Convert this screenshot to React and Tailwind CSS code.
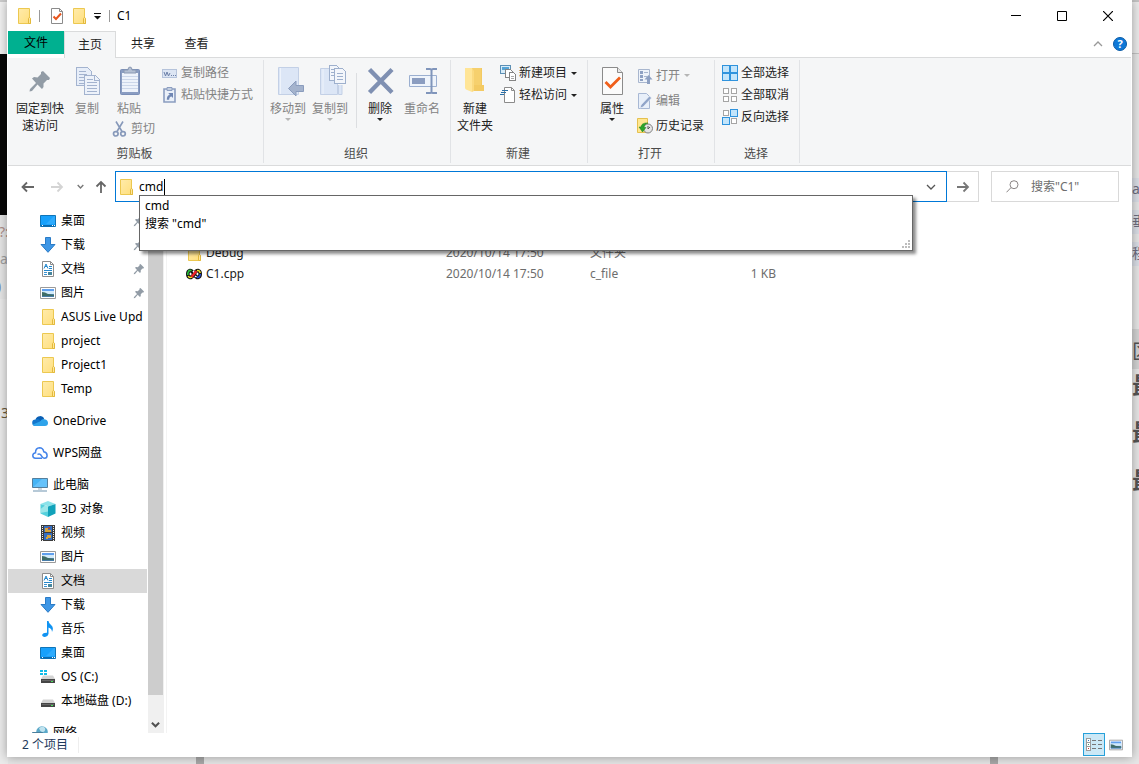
import React, { useState } from "react";

/* ---------- icons ---------- */

function Folder() {
  return (
    <svg width="16" height="16" viewBox="0 0 16 16" className="shrink-0">
      <defs>
        <linearGradient id="fold" x1="0" y1="0" x2="1" y2="1">
          <stop offset="0" stopColor="#ffebab" />
          <stop offset="1" stopColor="#ffdf7c" />
        </linearGradient>
      </defs>
      <path d="M2.500.5h11v9l1 1v5h-12z" fill="url(#fold)" stroke="#ecc850" />
      <path d="M12.500 15.500v-5l1-1.200 1 1.200v5z" fill="#ffe79a" stroke="#e3b93c" />
    </svg>
  );
}

function BigFolder() {
  return (
    <svg width="32" height="32" viewBox="0 0 32 32">
      <path d="M8 3h15v17h2v6H13z" fill="#f3ca63" />
      <path d="M6 3h7v24l-6-2.500q-1-.5-1-2z" fill="#ffe597" />
      <path d="M13 3h9v17h-9z" fill="#f6d06d" />
      <path d="M13 3 15 6V26l-2 1z" fill="#fbda80" />
    </svg>
  );
}

function CheckDoc({ size = 16 }) {
  return size === 16 ? (
    <svg width="16" height="16" viewBox="0 0 16 16">
      <path d="M2.500.5h8l3 3v12h-11z" fill="#fff" stroke="#8b8b8b" />
      <path d="M10.500.5v3h3" fill="none" stroke="#8b8b8b" />
      <path d="M4.500 8.500 7 11l5-5.500" fill="none" stroke="#e8561e" strokeWidth="2" />
    </svg>
  ) : (
    <svg width="32" height="32" viewBox="0 0 32 32">
      <path d="M6.500 2.500h15l5 5v22h-20z" fill="#fbfbfb" stroke="#8b8b8b" />
      <path d="M21.500 2.500v5h5" fill="#e8e8e8" stroke="#8b8b8b" />
      <path d="m9.500 17 5 5L24 12.500" fill="none" stroke="#f05f1b" strokeWidth="2.800" />
    </svg>
  );
}

function Pin({ size = 12 }) {
  return (
    <svg width={size} height={size} viewBox="0 0 24 24" className="shrink-0">
      <path
        d="M15 2 22 9 21 11 19 11 15.500 14.500 15.500 18 14 20 9.500 15.500 4 22 1.500 22.500 2 20 8 14 4 9.500 6 8 9.500 8.500 13 5 13 3z"
        fill="#929ca6"
      />
    </svg>
  );
}

function CopyBig() {
  return (
    <svg width="32" height="32" viewBox="0 0 32 32" stroke="#a3b3cf" shapeRendering="crispEdges">
      <path d="M5.500 2.500h11l4 4v14h-15z" fill="#e7eef9" />
      <path d="M8 6.500h7M8 9.500h8M8 12.500h5M8 15.500h5M8 18.500h5" fill="none" />
      <path d="M13.500 10.500h11l4 4v15h-15z" fill="#edf2fa" />
      <path d="M23.500 10.500v5h5M16 14.500h6M16 17.500h10M16 20.500h10M16 23.500h10M16 26.500h10" fill="none" />
    </svg>
  );
}

function PasteBig() {
  return (
    <svg width="32" height="32" viewBox="0 0 32 32">
      <rect x="7.500" y="4.500" width="19" height="25" rx="1" fill="#8a9dc2" stroke="#7b8fb7" />
      <path d="M9 8h16v19H9z" fill="#eef3fb" />
      <path d="M9 11.500h16M9 14.500h16M9 17.500h16M9 20.500h16M9 23.500h16" stroke="#ccd7ea" />
      <path d="M11 8V5h4q0-3 2-3t2 3h4v3z" fill="#b3bfd3" stroke="#8998b2" />
    </svg>
  );
}

function Scissors() {
  return (
    <svg width="16" height="16" viewBox="0 0 16 16" fill="none" stroke="#8799ba">
      <path d="m4 .5 6 10M11 .5 5 10.500" strokeWidth="1.600" />
      <ellipse cx="3.800" cy="12.800" rx="2.300" ry="2.200" strokeWidth="1.700" />
      <ellipse cx="11" cy="12.800" rx="2.300" ry="2.200" strokeWidth="1.700" />
    </svg>
  );
}

function PathIcon() {
  return (
    <svg width="16" height="16" viewBox="0 0 16 16">
      <rect x=".5" y="4.500" width="14" height="8" fill="#dce5f3" stroke="#b5c3db" />
      <path d="m2 7 1.500 4L5 7l1.500 4L8 8" fill="none" stroke="#6c80a8" />
      <path d="M9 10h1v1H9zM11 10h1v1h-1zM13 10h1v1h-1z" fill="#6c80a8" />
    </svg>
  );
}

function PasteShortcut() {
  return (
    <svg width="16" height="16" viewBox="0 0 16 16">
      <path d="M2 2h11v13H2z" fill="#eaf0f9" stroke="#8b9dc0" strokeWidth="1.600" />
      <path d="M5 .5h5v3H5z" fill="#c4cfe0" stroke="#8b9dc0" />
      <path d="M4.800 12.800c0-3.300 1-4.800 3-4.800L6.300 6H11v5L9.600 9.500c-1.800.2-2.400 1.500-2.400 3.300z" fill="#6f86b3" />
    </svg>
  );
}

function MoveTo() {
  return (
    <svg width="32" height="32" viewBox="0 0 32 32">
      <path d="M6.500 2.500h20v27h-20z" fill="#dce6f6" stroke="#c3d0e6" />
      <path d="M8.500 3v26" stroke="#eef3fb" />
      <path d="M16.500 23.500 24 16v4.500h7.500v6H24V31z" fill="#a4b3cd" stroke="#8a9cbd" />
    </svg>
  );
}

function CopyTo() {
  return (
    <svg width="32" height="32" viewBox="0 0 32 32">
      <path d="M6.500 3.500h17v26h-17z" fill="#dce6f6" stroke="#c3d0e6" />
      <path d="M24.500 20v9.500h3.500V20" fill="#dce6f6" stroke="#c3d0e6" />
      <path d="M9 4v25" stroke="#eef3fb" />
      <g stroke="#9eb0cd" fill="#f3f6fb" shapeRendering="crispEdges">
        <path d="M15.500.5h7l3 3v12h-10z" />
        <path d="M17 4.500h4M17 7.500h4M17 10.500h4" />
        <path d="M20.500 3.500h8l3 3v12h-11z" />
        <path d="M23 8.500h6M23 11.500h6M23 14.500h6" />
      </g>
    </svg>
  );
}

function DeleteX() {
  return (
    <svg width="32" height="32" viewBox="0 0 32 32">
      <path d="M5.500 4.500 28 27.500M28 4.500 5.500 27.500" stroke="#7f90b2" strokeWidth="4.400" />
    </svg>
  );
}

function Rename() {
  return (
    <svg width="32" height="32" viewBox="0 0 32 32">
      <path d="M3.500 10.500h27v11h-27z" fill="#eff4fb" stroke="#9bafd0" />
      <path d="M6 13h13v6H6z" fill="#8b9dc0" />
      <path d="M20 4h4q1 0 1.500 1 .5-1 1.500-1h4M25.500 5v21M20 28h4q1 0 1.500-1 .5 1 1.500 1h4" fill="none" stroke="#8095bb" strokeWidth="2" />
    </svg>
  );
}

function NewItem() {
  return (
    <svg width="16" height="16" viewBox="0 0 16 16" shapeRendering="crispEdges">
      <path d="M.5 .5h10v8H.5z" fill="#d8edfa" stroke="#5b8fb5" />
      <path d="M2 2h7v3H2z" fill="#56a4d6" />
      <path d="M5.500 4.500h5l2 2v6h-7z" fill="#fff" stroke="#848484" />
      <path d="M9.500 7.500h4l2 2v6h-6z" fill="#fff" stroke="#848484" />
      <path d="M11 11.500h3M11 13.500h3" stroke="#aaa" />
    </svg>
  );
}

function EasyAccess() {
  return (
    <svg width="16" height="16" viewBox="0 0 16 16">
      <path d="M4.500.5h7l3 3v12h-10z" fill="#fff" stroke="#8b8b8b" />
      <path d="M11.500.5v3h3" fill="none" stroke="#8b8b8b" />
      <path d="M2 3.500h6M1 5.500h5M0 7.500h4" stroke="#2b70a8" />
    </svg>
  );
}

function OpenIcon() {
  return (
    <svg width="16" height="16" viewBox="0 0 16 16">
      <path d="M1.500 1.500h11v13h-11z" fill="#eef3fa" stroke="#a8b6ce" />
      <path d="M3 3h3v3H3zM3 7h3v3H3zM3 11h3v2H3z" fill="#8ea1c3" />
      <path d="M7 4.500h4M7 8.500h3" stroke="#a8b6ce" />
      <path d="m11.500 7 4 4.500h-2.500V16h-3v-4.500H7.500z" fill="#8da0c2" />
    </svg>
  );
}

function EditIcon() {
  return (
    <svg width="16" height="16" viewBox="0 0 16 16">
      <path d="M1.500.5h8l3 3v12h-11z" fill="#e8eff9" stroke="#a8b8d4" />
      <path d="m3 15 1-3 8.500-9 2 2-8.500 9z" fill="#91a5c9" stroke="#f0f4fa" strokeWidth=".6" />
    </svg>
  );
}

function HistoryIcon() {
  return (
    <svg width="16" height="16" viewBox="0 0 16 16">
      <path d="M.5 .5h10v14H.5z" fill="#ffe790" stroke="#e5c04f" />
      <circle cx="11" cy="10.500" r="4.500" fill="#e4e4e4" stroke="#838383" />
      <path d="M11 8v3l2-2" fill="none" stroke="#555" />
      <path d="M11 5C6 4.500 4 7 4 9H2l3.500 5L9 9.500H7C7 7.500 8 6 11 5z" fill="#2ba52b" stroke="#1c801c" strokeWidth=".5" />
    </svg>
  );
}

function GridIcon({ on }) {
  const cells = [
    [0, 0],
    [8, 0],
    [0, 8],
    [8, 8],
  ];
  return (
    <svg width="16" height="16" viewBox="0 0 16 16" shapeRendering="crispEdges">
      {cells.map(([x, y], i) =>
        on[i] ? (
          <g key={i}>
            <rect x={x} y={y} width="8" height="8" fill="#2f93dd" />
            <rect x={x + 1} y={y + 1} width="6" height="6" fill="#c3e5fb" />
          </g>
        ) : (
          <rect key={i} x={x + 1.5} y={y + 1.5} width="5" height="5" fill="#fff" stroke="#a5a5a5" />
        )
      )}
    </svg>
  );
}

function Desktop() {
  return (
    <svg width="16" height="16" viewBox="0 0 16 16" className="shrink-0">
      <path d="M.5 2.500h15v11H.5z" fill="#17a0fb" stroke="#0f75b8" />
      <path d="M1 12h14v1.500H1z" fill="#0b69ad" />
      <path d="M2 12h1v1H2zM12 12h1v1h-1zM14 12h1v1h-1z" fill="#fff" />
      <path d="m6 11 8-8h1v8z" fill="#3db2ff" opacity=".6" />
    </svg>
  );
}

function Download() {
  return (
    <svg width="16" height="16" viewBox="0 0 16 16" className="shrink-0">
      <path d="M5.500.5h5v7h4.500L8 15.300 1 7.500h4.500z" fill="#3f97e6" stroke="#2a7bc6" />
    </svg>
  );
}

function Document() {
  return (
    <svg width="16" height="16" viewBox="0 0 16 16" className="shrink-0">
      <path d="M2.500.5h8l3 3v12h-11z" fill="#fff" stroke="#8c8c8c" />
      <path d="M10.500.5v3h3" fill="none" stroke="#8c8c8c" />
      <path d="m4 7.500 2-4.500 2 4.500M5 5.500h2M9 5.500h3M9 7.500h3M4 9.500h8" fill="none" stroke="#2487cc" />
      <path d="M4 11.500h3M4 13.500h3" stroke="#3a93d2" />
      <path d="M8 11h4v3H8z" fill="#47859c" />
    </svg>
  );
}

function Picture({ w = 16 }) {
  return (
    <svg width={w} height={w} viewBox="0 0 16 16" className="shrink-0">
      <path d="M.5 2.500h15v11H.5z" fill="#fff" stroke="#9a9a9a" />
      <path d="M2 4h12v8H2z" fill="#5f9fee" />
      <path d="M2 6h12v3H2z" fill="#d2eafa" />
      <path d="M2 7q3 0 6 2l6 .5v2H2z" fill="#3f6d67" />
      <path d="M2 11h12v1H2z" fill="#477ca8" />
    </svg>
  );
}

function OneDrive() {
  return (
    <svg width="16" height="16" viewBox="0 0 16 16" className="shrink-0">
      <path d="M3.500 6.500a4.600 4.600 0 0 1 8.700-.5l-5 4z" fill="#0a5fb4" />
      <path d="M3.500 13a3.300 3.300 0 0 1 0-6.600q2.500-1 4.500 1l3 5z" fill="#1276cd" />
      <path d="M8 8.500Q10 5 12.500 6.200 16 7 16 10q0 3-3 3H3.500Q1.500 13 .8 11.500z" fill="#2ea3ea" />
    </svg>
  );
}

function WpsCloud() {
  return (
    <svg width="16" height="16" viewBox="0 0 16 16" className="shrink-0" fill="none" stroke="#4484ea" strokeWidth="1.500">
      <path d="M10 13.200H3.500Q.8 13 .8 10.500.8 8.300 3.500 7.800 3.500 3 7.500 2.800q3.500 0 4.300 4 3.300.8 3.300 3.600 0 2.800-2.600 2.800-1.500 0-2.500-1.500L8.500 9.500Q7 8.300 5.500 9.500" />
    </svg>
  );
}

function Computer() {
  return (
    <svg width="16" height="16" viewBox="0 0 16 16" className="shrink-0">
      <path d="M.5 1.500h15v9H.5z" fill="#46b4f5" stroke="#547f9d" />
      <path d="m1 10 9-8h5v8z" fill="#79ccfd" opacity=".6" />
      <path d="M6 11.500h4v1H6z" fill="#9fb1bf" />
      <path d="M1 13.500h14v1H1z" fill="#6c93ae" />
    </svg>
  );
}

function Cube() {
  return (
    <svg width="16" height="16" viewBox="0 0 16 16" className="shrink-0">
      <path d="M8 0 15.500 3 8 5.500.5 3z" fill="#8ce3ea" />
      <path d="M.5 3 8 5.500V16L.5 12.500z" fill="#55d0dc" />
      <path d="M15.500 3 8 5.500V16l7.500-3.500z" fill="#11a2ba" />
      <path d="M.5 8 6 3.800 8 5.500v5L.5 12z" fill="#c1f1ef" opacity=".65" />
    </svg>
  );
}

function Video() {
  return (
    <svg width="16" height="16" viewBox="0 0 16 16" className="shrink-0" shapeRendering="crispEdges">
      <path d="M1 0h14v16H1z" fill="#3c3c3c" />
      <path d="M4 1h8v6H4zM4 8h8v7H4z" fill="#356fc2" />
      <path d="M5 3h3v2h3v2H5zM7 10h4v3H8v1H6v-2h1z" fill="#d9a43a" />
      <path d="M8 2h2v2H8z" fill="#a9453b" />
      <path d="M2.500 1v15M13.500 1v15" stroke="#eee" strokeDasharray="1 1" />
    </svg>
  );
}

function Music() {
  return (
    <svg width="16" height="16" viewBox="0 0 16 16" className="shrink-0">
      <path d="M7 0h1.500q.2 2.500 3 4.500 2.500 2.500.5 6.500 0-3.500-3.500-4.500V13Q8 15.600 5 15.900 2 16 2.200 13.800 3 11.500 7 11.700z" fill="#1093f2" />
    </svg>
  );
}

function Drive({ os }) {
  return (
    <svg width="16" height="16" viewBox="0 0 16 16" className="shrink-0">
      <path d="M3 6.500h10L15 10H1z" fill="#d3d3d3" />
      {os && <path d="M0 1h3v2H0zM4 1h3v2H4zM0 4h3v2H0zM4 4h3v2H4z" fill="#12bce8" />}
      <path d="M1 10h14v4H1z" fill="#454545" />
      <path d="M2 11h12v1H2z" fill="#666" />
      <path d="M11 12h2v1h-2z" fill="#49e05b" />
    </svg>
  );
}

function Network() {
  return (
    <svg width="16" height="16" viewBox="0 0 16 16" className="shrink-0">
      <circle cx="10" cy="7" r="5.800" fill="#5ba8c8" />
      <path d="M7 3q4-3 6 0 1 3-2 4-3 0-4-4z" fill="#bfe2ee" />
      <path d="M.5 7.500h10v6H.5z" fill="#3ba4dd" stroke="#4b7e9c" />
    </svg>
  );
}

function CppFile() {
  return (
    <svg width="16" height="16" viewBox="0 0 16 16" fill="none">
      <path d="M8 8Q6 4.500 4 4.500 1.800 5 1.800 8T4 11.500Q6 11.500 8 8t4-3.500q2.200.5 2.200 3.500T12 11.500Q10 11.500 8 8z" stroke="#111" strokeWidth="3.600" />
      <path d="M5.500 4.800Q3.500 3.800 2.500 5.500 1.500 7 1.800 9" stroke="#25c43c" strokeWidth="1.600" />
      <path d="M2.200 10q1.300 2.500 4 .8" stroke="#f2e31c" strokeWidth="1.600" />
      <path d="M8.300 6.500 7 5" stroke="#fff" strokeWidth="1.500" />
      <path d="m9 10 1.500 1" stroke="#fff" strokeWidth="1.500" />
      <path d="M5.500 11 10.500 5" stroke="#ed2328" strokeWidth="2.600" />
      <path d="M11 4.700Q13.500 4 14.200 7" stroke="#f2e31c" strokeWidth="1.600" />
      <path d="M14.300 8q-.5 4-3.500 3.200" stroke="#234be0" strokeWidth="1.600" />
    </svg>
  );
}

function Arrow({ dir = "left", color = "#666" }) {
  const d = {
    left: "M14 8H2.500M7 3.500 2.500 8 7 12.500",
    right: "M2 8h11M8.500 3.500 13 8l-4.500 4.500",
    up: "M8 14V3M3.500 7.500 8 3l4.500 4.500",
  }[dir];
  return (
    <svg width="16" height="16" viewBox="0 0 16 16" fill="none" stroke={color} strokeWidth="1.800">
      <path d={d} />
    </svg>
  );
}

function Chevron({ color = "#555", up = false, thick = 1.3, size = 10 }) {
  return (
    <svg width={size} height={size} viewBox="0 0 10 10" fill="none" stroke={color} strokeWidth={thick}>
      <path d={up ? "M1 7l4-4 4 4" : "M1 3l4 4 4-4"} />
    </svg>
  );
}

function Caret({ color = "#222" }) {
  return (
    <svg width="6" height="3" viewBox="0 0 6 3">
      <path d="M0 0h6L3 3z" fill={color} />
    </svg>
  );
}

/* ---------- ribbon ---------- */

function BigButton({ icon, lines, dim, caret, width }) {
  return (
    <button type="button" className={`flex flex-col items-center ${width} ${dim ? "text-[#838383]" : "text-[#222]"}`}>
      <span className="flex h-8 items-center justify-center">{icon}</span>
      <span className="mt-[3px] leading-[17px] whitespace-nowrap">
        {lines.map((l) => (
          <span key={l} className="block">
            {l}
          </span>
        ))}
      </span>
      {caret && (
        <span className="pt-px">
          <Caret color={dim ? "#b5b5b5" : "#222"} />
        </span>
      )}
    </button>
  );
}

function SmallButton({ icon, label, dim, caret, height = "h-[22px]" }) {
  return (
    <button type="button" className={`flex items-center gap-[3px] whitespace-nowrap ${height} ${dim ? "text-[#838383]" : "text-[#222]"}`}>
      {icon}
      <span>{label}</span>
      {caret && (
        <span className="ml-px">
          <Caret color={dim ? "#b5b5b5" : "#222"} />
        </span>
      )}
    </button>
  );
}

function Group({ label, width, children }) {
  return (
    <section aria-label={label} className={`my-[2px] flex shrink-0 flex-col border-r border-[#e1e3e6] ${width}`}>
      <div className="flex flex-1">{children}</div>
      <div className="h-[18px] pr-[2px] text-center leading-[18px] text-[#4a4a4a]">{label}</div>
    </section>
  );
}

function Ribbon() {
  return (
    <div className="flex h-[108px] shrink-0 overflow-hidden border-b border-[#dadbdc] bg-[#f5f6f7]">
      <Group label="剪贴板" width="w-64">
        <div className="flex pt-[5px] pl-[6px]">
          <BigButton width="w-[52px]" icon={<Pin size={24} />} lines={["固定到快", "速访问"]} />
          <BigButton width="w-[42px]" icon={<CopyBig />} lines={["复制"]} dim />
          <div className="flex w-[50px] flex-col items-start">
            <BigButton width="w-[42px]" icon={<PasteBig />} lines={["粘贴"]} dim />
            <span className="pt-px pl-1">
              <SmallButton icon={<Scissors />} label="剪切" dim />
            </span>
          </div>
        </div>
        <div className="flex flex-col pt-[2px] pl-1">
          <SmallButton icon={<PathIcon />} label="复制路径" dim />
          <SmallButton icon={<PasteShortcut />} label="粘贴快捷方式" dim />
        </div>
      </Group>
      <Group label="组织" width="w-[187px]">
        <div className="flex items-start pt-[5px] pl-[3px]">
          <BigButton width="w-[42px]" icon={<MoveTo />} lines={["移动到"]} dim caret />
          <BigButton width="w-[42px]" icon={<CopyTo />} lines={["复制到"]} dim caret />
          <span className="mx-1 mt-2 ml-[5px] h-[55px] w-px bg-[#dcdee1]" />
          <BigButton width="w-[38px]" icon={<DeleteX />} lines={["删除"]} caret />
          <BigButton width="w-[46px]" icon={<Rename />} lines={["重命名"]} dim />
        </div>
      </Group>
      <Group label="新建" width="w-[137px]">
        <div className="flex pt-[5px] pl-[3px]">
          <BigButton width="w-[42px]" icon={<BigFolder />} lines={["新建", "文件夹"]} />
        </div>
        <div className="flex flex-col pt-[2px] pl-1">
          <SmallButton icon={<NewItem />} label="新建项目" caret />
          <SmallButton icon={<EasyAccess />} label="轻松访问" caret />
        </div>
      </Group>
      <Group label="打开" width="w-[127px]">
        <div className="flex items-start pt-[5px] pl-[3px]">
          <BigButton width="w-[42px]" icon={<CheckDoc size={32} />} lines={["属性"]} caret />
        </div>
        <div className="flex flex-col pt-[3px] pl-1">
          <SmallButton icon={<OpenIcon />} label="打开" dim caret height="h-[25px]" />
          <SmallButton icon={<EditIcon />} label="编辑" dim height="h-[25px]" />
          <SmallButton icon={<HistoryIcon />} label="历史记录" height="h-[25px]" />
        </div>
      </Group>
      <Group label="选择" width="w-[85px]">
        <div className="flex flex-col pt-[2px] pl-[7px]">
          <SmallButton icon={<GridIcon on={[1, 1, 1, 1]} />} label="全部选择" />
          <SmallButton icon={<GridIcon on={[0, 0, 0, 0]} />} label="全部取消" />
          <SmallButton icon={<GridIcon on={[0, 1, 1, 0]} />} label="反向选择" />
        </div>
      </Group>
    </div>
  );
}

/* ---------- title, tabs, address ---------- */

function TitleBar() {
  return (
    <header className="flex h-[31px] shrink-0 items-center text-black">
      <div className="flex items-center pl-2">
        <Folder />
        <span className="mx-[7px] h-3 w-px bg-[#999]" />
        <button type="button" aria-label="属性" className="ml-[2px]">
          <CheckDoc />
        </button>
        <button type="button" aria-label="新建文件夹" className="ml-[6px]">
          <Folder />
        </button>
        <button type="button" aria-label="自定义快速访问工具栏" className="ml-[7px]">
          <svg width="7" height="8" viewBox="0 0 7 8">
            <path d="M0 1h7v1H0zM0 4h7L3.500 7.500z" fill="#111" />
          </svg>
        </button>
        <span className="mx-[7px] ml-2 h-3 w-px bg-[#999]" />
        <span>C1</span>
      </div>
      <div className="ml-auto flex self-stretch">
        <button type="button" aria-label="最小化" className="flex w-[46px] items-center justify-center">
          <svg width="10" height="10" viewBox="0 0 10 10">
            <path d="M0 4h10v1H0z" />
          </svg>
        </button>
        <button type="button" aria-label="最大化" className="flex w-[46px] items-center justify-center">
          <svg width="10" height="10" viewBox="0 0 10 10">
            <path d="M.5 .5h9v9h-9z" fill="none" stroke="#000" />
          </svg>
        </button>
        <button type="button" aria-label="关闭" className="flex w-[46px] items-center justify-center">
          <svg width="10" height="10" viewBox="0 0 10 10">
            <path d="m0 0 10 10M10 0 0 10" stroke="#000" strokeWidth="1.200" />
          </svg>
        </button>
      </div>
    </header>
  );
}

function Tabs() {
  return (
    <nav className="flex h-[27px] shrink-0 items-start text-[#222]">
      <button type="button" className="h-[23px] w-14 bg-[#00b090] text-black">
        文件
      </button>
      <button type="button" className="h-[27px] w-[52px] border border-b-0 border-[#dadbdc] bg-[#f5f6f7] pb-px">
        主页
      </button>
      <div className="flex h-[27px] flex-1 items-start border-b border-[#dadbdc]">
        <button type="button" className="h-[25px] w-[54px]">
          共享
        </button>
        <button type="button" className="h-[25px] w-[53px]">
          查看
        </button>
        <div className="ml-auto flex h-[26px] items-center gap-[10px] pr-1">
          <button type="button" aria-label="最小化功能区">
            <Chevron up color="#999" />
          </button>
          <button
            type="button"
            aria-label="帮助"
            className="h-[14px] w-[14px] rounded-full border border-[#0a5ba6] bg-[#0f78d7] text-[11px] leading-[12px] font-bold text-white"
          >
            ?
          </button>
        </div>
      </div>
    </nav>
  );
}

function AddressRow() {
  const [value, setValue] = useState("cmd");
  return (
    <div className="flex h-10 shrink-0 items-start pt-[5px] pr-3 pl-3">
      <div className="flex h-[31px] w-[95px] shrink-0 items-center">
        <button type="button" aria-label="后退">
          <Arrow />
        </button>
        <button type="button" aria-label="前进" className="ml-[13px]">
          <Arrow dir="right" color="#d4d4d4" />
        </button>
        <button type="button" aria-label="最近浏览的位置" className="ml-3">
          <Chevron size={7} thick={2} color="#777" />
        </button>
        <button type="button" aria-label="上移" className="ml-[9px]">
          <Arrow dir="up" />
        </button>
      </div>
      <div className="relative h-[31px] flex-1">
        <div className="flex h-full items-center border border-[#0078d7] bg-white pr-[10px] pl-[2px]">
          <Folder />
          <label htmlFor="addr" className="sr-only">
            地址
          </label>
          <input
            id="addr"
            value={value}
            onChange={(e) => setValue(e.target.value)}
            className="ml-[5px] h-5 [field-sizing:content] text-black caret-transparent outline-none"
          />
          <span className="ml-px h-4 w-px bg-black" />
          <button type="button" aria-label="上一个位置" className="ml-auto">
            <Chevron />
          </button>
        </div>
        <div
          role="listbox"
          aria-label="建议"
          className="absolute top-6 right-[34px] left-6 z-10 h-14 border border-[#666] bg-white pt-px pl-[5px] leading-[18px] text-black shadow-[3px_3px_3px_rgba(0,0,0,0.45)]"
        >
          <div role="option" aria-selected="false">
            cmd
          </div>
          <div role="option" aria-selected="false">
            搜索 "cmd"
          </div>
          <svg width="8" height="8" viewBox="0 0 8 8" className="absolute right-[2px] bottom-[2px]">
            <path d="M6 0h2v2H6zM3 3h2v2H3zM6 3h2v2H6zM0 6h2v2H0zM3 6h2v2H3zM6 6h2v2H6z" fill="#bdbdbd" />
          </svg>
        </div>
      </div>
      <button type="button" aria-label="转到" className="flex h-[31px] w-8 items-center justify-center border border-l-0 border-[#d9d9d9]">
        <Arrow dir="right" color="#777" />
      </button>
      <label className="ml-3 flex h-[31px] w-32 items-center border border-[#d9d9d9] pl-[14px]">
        <svg width="13" height="13" viewBox="0 0 13 13" fill="none" stroke="#8a8585" className="shrink-0">
          <circle cx="8" cy="4.700" r="4" />
          <path d="M5 7.600.5 12.300" />
        </svg>
        <span className="sr-only">搜索</span>
        <input placeholder={'搜索"C1"'} className="ml-3 w-20 outline-none placeholder:text-[#6d6d6d]" />
      </label>
    </div>
  );
}

/* ---------- navigation and files ---------- */

const quick = [
  ["桌面", Desktop, true],
  ["下载", Download, true],
  ["文档", Document, true],
  ["图片", Picture, true],
  ["ASUS Live Upd", Folder],
  ["project", Folder],
  ["Project1", Folder],
  ["Temp", Folder],
];

const pc = [
  ["3D 对象", Cube],
  ["视频", Video],
  ["图片", Picture],
  ["文档", Document, false, true],
  ["下载", Download],
  ["音乐", Music],
  ["桌面", Desktop],
  ["OS (C:)", () => <Drive os />],
  ["本地磁盘 (D:)", Drive],
];

function NavItem({ label, Icon, root, pinned, selected }) {
  return (
    <li>
      <a
        href="#"
        className={`flex h-6 items-center gap-[5px] overflow-hidden whitespace-nowrap ${root ? "pl-6" : "pl-8"} ${selected ? "bg-[#d9d9d9]" : ""}`}
      >
        <Icon />
        <span>{label}</span>
        {pinned && (
          <span className="mr-[2px] ml-auto">
            <Pin size={12} />
          </span>
        )}
      </a>
    </li>
  );
}

function Sidebar() {
  return (
    <aside className="flex w-[159px] shrink-0 border-r border-[#f3f3f3]">
      <ul className="w-[139px] overflow-hidden pt-[3px] text-black">
        {quick.map(([label, Icon, pinned]) => (
          <NavItem key={label} label={label} Icon={Icon} pinned={pinned} />
        ))}
        <li className="h-2" />
        <NavItem root label="OneDrive" Icon={OneDrive} />
        <li className="h-2" />
        <NavItem root label="WPS网盘" Icon={WpsCloud} />
        <li className="h-2" />
        <NavItem root label="此电脑" Icon={Computer} />
        {pc.map(([label, Icon, , selected]) => (
          <NavItem key={label} label={label} Icon={Icon} selected={selected} />
        ))}
        <li className="h-2" />
        <NavItem root label="网络" Icon={Network} />
      </ul>
      <div className="ml-px flex w-4 flex-col bg-[#f0f0f0] pt-4">
        <div className="mr-px flex-1 bg-[#cdcdcd]" />
        <div className="flex h-[38px] items-end justify-center pr-px pb-1">
          <Chevron thick={2.2} color="#505050" size={9} />
        </div>
      </div>
    </aside>
  );
}

function Files() {
  const rows = [
    ["Debug", Folder, "2020/10/14 17:50", "文件夹", ""],
    ["C1.cpp", CppFile, "2020/10/14 17:50", "c_file", "1 KB"],
  ];
  return (
    <main className="flex-1 overflow-hidden pt-[36px] pl-[19px]">
      <table className="table-fixed border-collapse text-[#6d6d6d]">
        <colgroup>
          <col className="w-[260px]" />
          <col className="w-36" />
          <col className="w-[100px]" />
          <col className="w-[86px]" />
        </colgroup>
        <tbody>
          {rows.map(([name, Icon, date, type, size]) => (
            <tr key={name} className="h-[21px]">
              <td className="p-0">
                <span className="flex items-center gap-1 text-[#222]">
                  <Icon />
                  {name}
                </span>
              </td>
              <td className="p-0">{date}</td>
              <td className="p-0">{type}</td>
              <td className="p-0 text-right">{size}</td>
            </tr>
          ))}
        </tbody>
      </table>
    </main>
  );
}

function StatusBar() {
  return (
    <footer className="flex h-6 shrink-0 items-start pr-2 pl-[14px] text-[#1e395b]">
      <span className="mr-[10px] leading-[24px]">2 个项目</span>
      <span className="mt-1 h-4 w-px bg-[#eee]" />
      <div className="ml-auto flex h-[23px] items-center gap-1">
        <button type="button" aria-label="详细信息" className="flex h-[23px] w-[22px] items-center justify-center border border-[#26a0da] bg-[#cbe8f6]">
          <svg width="16" height="13" viewBox="0 0 16 13" shapeRendering="crispEdges">
            <path d="M.5 .5h4v4h-4zM.5 4.500h4v4h-4zM.5 8.500h4v4h-4z" fill="#fff" stroke="#9b9b9b" />
            <path d="M6 2.500h4M12 2.500h4M6 6.500h4M12 6.500h4M6 10.500h4M12 10.500h4" stroke="#777" />
            <path d="M2 2h1v1H2z" fill="#2f75b5" />
            <path d="M2 6h1v1H2z" fill="#3d9b6c" />
            <path d="M2 10h1v1H2z" fill="#d0342c" />
          </svg>
        </button>
        <button type="button" aria-label="大图标">
          <Picture w={14} />
        </button>
      </div>
    </footer>
  );
}

/* ---------- what shows round the window ---------- */

function Backdrop() {
  return (
    <div aria-hidden="true" className="absolute inset-0 overflow-hidden bg-[#e6e6e6]">
      <div className="absolute top-0 left-0 h-[54px] w-2 border-t-2 border-[#ccc] bg-[#f2f2f2]" />
      <div className="absolute top-[54px] left-0 h-[161px] w-2 bg-[#080808]" />
      <div className="absolute top-[224px] -left-px text-[14px] text-[#b0908a]">?:</div>
      <div className="absolute top-[251px] left-0 text-[14px] text-[#a0a0a0]">a</div>
      <div className="absolute top-[278px] -left-[3px] text-[14px] text-[#7388b5]">)</div>
      <div className="absolute top-[299px] left-0 h-[465px] w-2 bg-[#ebebeb]" />
      <div className="absolute top-[405px] left-px text-[14px] text-[#6b5a3c]">3</div>
      <div className="absolute top-0 right-0 h-[54px] w-2 border-t-2 border-b border-[#c4c4c4] bg-[#ebebeb]" />
      <div className="absolute top-[178px] right-0 h-6 w-[7px] overflow-hidden bg-[#dadee6] pt-[3px] text-[14px] text-[#6d6d80]">a</div>
      <div className="absolute top-[210px] right-0 h-6 w-[7px] overflow-hidden bg-[#dadee6] pt-[3px] text-[14px] text-[#6d6d80]">垂</div>
      <div className="absolute top-[242px] right-0 h-6 w-[7px] overflow-hidden bg-[#dadee6] pt-[3px] text-[14px] text-[#6d6d80]">程</div>
      <div className="absolute top-[329px] right-0 h-10 w-[7px] bg-[#d3d3d3]" />
      <div className="absolute top-[340px] right-0 w-[7px] overflow-hidden text-[20px] leading-[24px] text-[#555]">区</div>
      <div className="absolute top-[371px] right-0 w-[7px] overflow-hidden text-[24px] leading-[28px] font-bold text-[#555]">最</div>
      <div className="absolute top-[418px] right-0 w-[7px] overflow-hidden text-[24px] leading-[28px] font-bold text-[#555]">最</div>
      <div className="absolute top-[466px] right-0 w-[7px] overflow-hidden text-[24px] leading-[28px] font-bold text-[#555]">最</div>
      <div className="absolute bottom-0 left-[196px] h-2 w-2 bg-[#a8a8a8]" />
      <div className="absolute right-[141px] bottom-0 h-2 w-2 bg-[#a8a8a8]" />
    </div>
  );
}

export default function App() {
  return (
    <div className="relative flex h-screen flex-col px-[7px] pb-[7px] font-['Noto_Sans','Noto_Sans_CJK_SC',sans-serif] text-[12px] leading-[16px]">
      <Backdrop />
      <div className="relative flex min-h-0 flex-1 flex-col bg-white px-px shadow-[0_0_10px_rgba(0,0,0,0.35)]">
        <TitleBar />
        <Tabs />
        <Ribbon />
        <AddressRow />
        <div className="flex min-h-0 flex-1">
          <Sidebar />
          <Files />
        </div>
        <StatusBar />
      </div>
    </div>
  );
}
